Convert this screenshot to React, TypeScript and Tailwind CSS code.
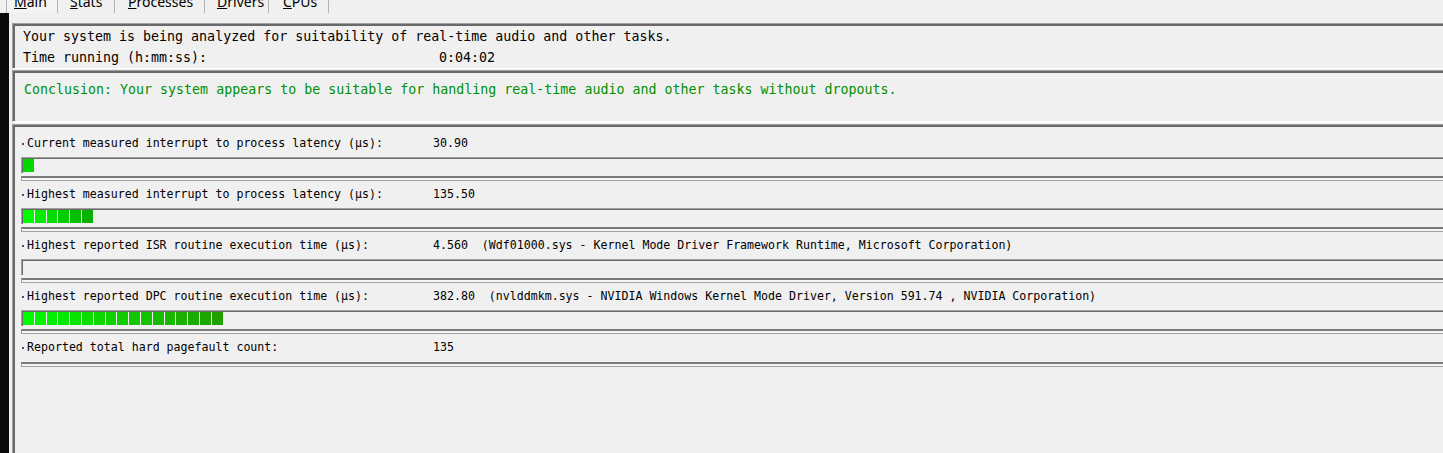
import React from "react";

type Row = { label: string; value: string; blocks: number; end: [number, number, number]; bar: boolean };

const rows: Row[] = [
  { label: "Current measured interrupt to process latency (µs):", value: "30.90", blocks: 1, end: [0, 216, 0], bar: true },
  { label: "Highest measured interrupt to process latency (µs):", value: "135.50", blocks: 6, end: [8, 176, 0], bar: true },
  {
    label: "Highest reported ISR routine execution time (µs):",
    value: "4.560  (Wdf01000.sys - Kernel Mode Driver Framework Runtime, Microsoft Corporation)",
    blocks: 0,
    end: [0, 0, 0],
    bar: true,
  },
  {
    label: "Highest reported DPC routine execution time (µs):",
    value: "382.80  (nvlddmkm.sys - NVIDIA Windows Kernel Mode Driver, Version 591.74 , NVIDIA Corporation)",
    blocks: 17,
    end: [32, 160, 0],
    bar: true,
  },
  { label: "Reported total hard pagefault count:", value: "135", blocks: 0, end: [0, 0, 0], bar: false },
];

function blockColor(i: number, n: number, end: [number, number, number]) {
  if (n <= 1) return `rgb(${end[0]},${end[1]},${end[2]})`;
  const t = i / (n - 1);
  const r = Math.round(0 + (end[0] - 0) * t);
  const g = Math.round(250 + (end[1] - 250) * t);
  const b = Math.round(0 + (end[2] - 0) * t);
  return `rgb(${r},${g},${b})`;
}

const tabs = [
  { first: "M", rest: "ain", w: "w-[52px]", pl: "pl-[7px]", sel: true },
  { first: "S", rest: "tats", w: "w-[57px]", pl: "pl-[12px]", sel: false },
  { first: "P", rest: "rocesses", w: "w-[90px]", pl: "pl-[13px]", sel: false },
  { first: "D", rest: "rivers", w: "w-[64px]", pl: "pl-[12px]", sel: false },
  { first: "C", rest: "PUs", w: "w-[60px]", pl: "pl-[14px]", sel: false },
];

function Bar({ blocks, end }: { blocks: number; end: [number, number, number] }) {
  return (
    <div className="ml-[6px] mt-[3px] h-[16px] w-[1500px] border-t border-l border-[#a0a0a0] bg-[#f0f0f0]">
      <div className="flex h-full border-t border-l border-[#696969]">
        {Array.from({ length: blocks }).map((_, i) => (
          <div
            key={i}
            className="mr-[1px] h-[13px] w-[10.8px]"
            style={{ backgroundColor: blockColor(i, blocks, end) }}
          />
        ))}
      </div>
    </div>
  );
}

function Separator({ mt }: { mt: string }) {
  return (
    <div className={`ml-[6px] ${mt} h-[5px] w-[1500px] border-t-2 border-l border-b border-t-[#7a7a7a] border-l-[#a0a0a0] border-b-[#a0a0a0] bg-[#f4f4f4]`} />
  );
}

export default function App() {
  return (
    <div
      className="relative h-[453px] w-[1443px] overflow-hidden bg-[#f0f0f0] text-black"
      style={{ fontFamily: "'DejaVu Sans Mono', monospace" }}
    >
      {/* tab strip */}
      <div className="flex h-[13px] overflow-hidden pl-[6px]" style={{ fontFamily: "'Noto Sans', 'Open Sans', sans-serif" }}>
        {tabs.map((t, i) => (
          <div
            key={i}
            className={`${t.w} h-[13px] border-r border-[#b4b4b4] ${t.sel ? "border-l bg-[#f4f4f4]" : ""} ${t.pl} overflow-hidden`}
          >
            <div className="-mt-[5px] text-[14px] leading-[14px] whitespace-pre">
              <span className="underline underline-offset-[1px]">{t.first}</span>
              {t.rest}
            </div>
          </div>
        ))}
      </div>

      <div className="flex">
        {/* black left band */}
        <div className="h-[440px] w-[9px] shrink-0 bg-[#0a0a0a]" />
        <div className="ml-[3px] flex flex-col">
          {/* panel 1 */}
          <div className="mt-[10px] w-[1500px] border-t border-l border-[#a0a0a0] border-b border-b-white">
            <div className="h-[44px] border-t-2 border-l-2 border-[#696969] pl-[8px] pt-[0px] text-[13.3px] leading-[21px]">
              <div className="whitespace-pre">Your system is being analyzed for suitability of real-time audio and other tasks.</div>
              <div className="flex whitespace-pre">
                <span className="w-[416px]">Time running (h:mm:ss):</span>
                <span>0:04:02</span>
              </div>
            </div>
          </div>
          {/* panel 2 */}
          <div className="mt-[1px] w-[1500px] border-t border-l border-[#a0a0a0] border-b-2 border-b-white">
            <div className="h-[50px] border-t-2 border-l-2 border-[#696969] pl-[9px] pt-[8px] text-[13.3px] leading-[18px] text-[#008f00]">
              <div className="whitespace-pre">Conclusion: Your system appears to be suitable for handling real-time audio and other tasks without dropouts.</div>
            </div>
          </div>
          {/* panel 3 */}
          <div className="mt-[1px] w-[1500px] border-t border-l border-[#a0a0a0]">
            <div className="h-[340px] border-t-2 border-l-2 border-[#696969] pt-[7px] text-[11.6px]">
              {rows.map((r, i) => (
                <div key={i} className={i === 0 ? "" : "mt-[4px]"}>
                  <div className="flex h-[20px] items-center pl-[7px] whitespace-pre">
                    <span className="mr-[3px] h-[2px] w-[2px] bg-[#505050]" />
                    <span className="w-[406px]">{r.label}</span>
                    <span>{r.value}</span>
                  </div>
                  {r.bar ? (
                    <>
                      <Bar blocks={r.blocks} end={r.end} />
                      <Separator mt="mt-[3px]" />
                    </>
                  ) : (
                    <Separator mt="mt-[4px]" />
                  )}
                </div>
              ))}
            </div>
          </div>
        </div>
      </div>
    </div>
  );
}
